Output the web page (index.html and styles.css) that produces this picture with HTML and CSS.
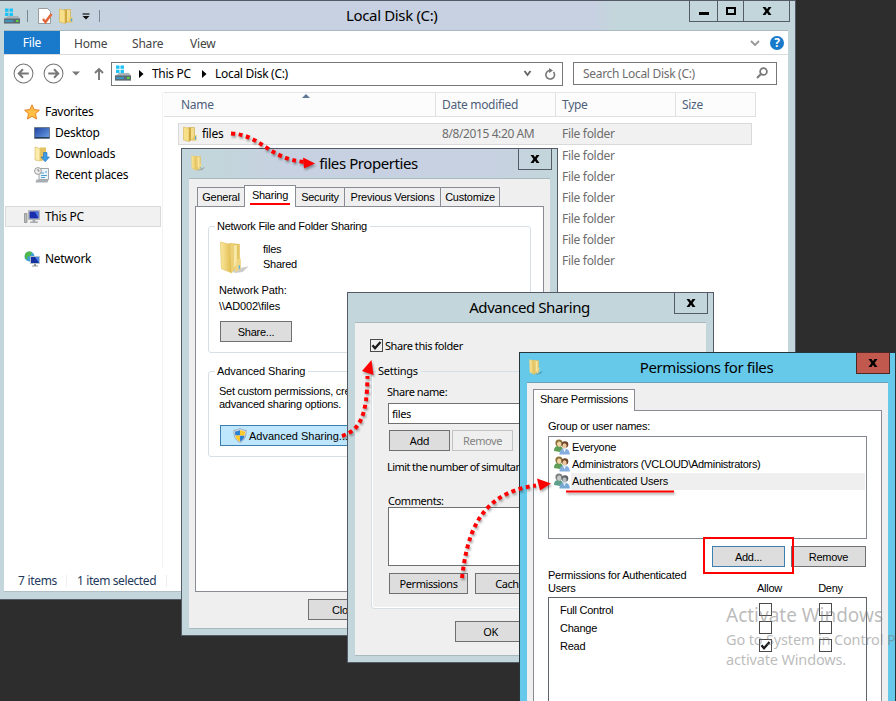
FILE: index.html
```html
<!DOCTYPE html>
<html lang="en">
<head>
  <meta charset="UTF-8">
  <title>Local Disk (C:)</title>
  <link rel="stylesheet" href="styles.css">
</head>
<body>

  <!-- shared icons -->
  <svg class="defs" width="0" height="0">
    <defs>
      <linearGradient id="gold" x1="0" y1="0" x2="1" y2="0">
        <stop offset="0" stop-color="#fbe9a0"/>
        <stop offset="1" stop-color="#dfb94a"/>
      </linearGradient>
      <linearGradient id="screen" x1="0" y1="0" x2="1" y2="1">
        <stop offset="0" stop-color="#1d3f9e"/>
        <stop offset="1" stop-color="#6fa6ea"/>
      </linearGradient>
    </defs>
    <symbol id="folder" viewBox="0 0 16 16">
      <path d="M6 1.500h6.500v12.500H6z" fill="#f3dd8c" stroke="#c9a640" stroke-width=".6"/>
      <path d="M1.500 1 7 2.500V15.500L1.500 14z" fill="#f8e08a" stroke="#d4b352" stroke-width=".6"/>
      <path d="M7 2.500 9 1.500v13L7 15.500z" fill="#d0a840"/>
      <path d="M12 9h2.500v5.500h-4v-2z" fill="#e8ca6c"/>
      <path d="M13.500 10.500v3" stroke="#4c9fe0" stroke-width="1.200"/>
    </symbol>
    <symbol id="folder-big" viewBox="0 0 30 34">
      <path d="M12 30 30 26 24 32 16 33z" fill="#000" opacity=".2"/>
      <path d="M10 2 21 3v21l-7 7z" fill="#e6c561"/>
      <path d="M14 5 18 4v20l-4 5z" fill="#f8e8a8"/>
      <path d="M1 1 11 3.500 13 33 2 28.500z" fill="url(#gold)" stroke="#e3c365" stroke-width=".7"/>
      <path d="M11 3.500 15 2v27l-2.500 4z" fill="#ecd077"/>
      <path d="M18 19 22 18v11l-6 3z" fill="#f0d680"/>
      <path d="M20.500 25v4" stroke="#69b1e2" stroke-width="1.500"/>
    </symbol>
    <symbol id="drive" viewBox="0 0 16 16">
      <path d="M1 .5h3.500v3.300H1zM5.500.5H9v3.300H5.500zM1 4.800h3.500V8H1zM5.500 4.800H9V8H5.500z" fill="#1cc1f5"/>
      <path d="M2 9.500 4 8h10L16 10.500v5H0v-5z" fill="#a9b4ba"/>
      <path d="M0 10.500h16v5H0z" fill="#5c6a73"/>
      <path d="M1 12h8v2H1z" fill="#3e94bd"/>
      <path d="M12 12h2.500v2H12z" fill="#59d335"/>
    </symbol>
    <symbol id="users" viewBox="0 0 16 16">
      <path d="M0 12c0-4 2-5 4.500-5S9 8 9 12l-3 1z" fill="#5f9e58"/>
      <circle cx="5" cy="4" r="3.600" fill="#8b7136"/>
      <ellipse cx="5.200" cy="5.200" rx="2.100" ry="2.700" fill="#f2d5a8"/>
      <circle cx="11" cy="5.500" r="3.300" fill="#6b4326"/>
      <ellipse cx="10.500" cy="6.700" rx="2.100" ry="2.500" fill="#eec9a1"/>
      <path d="M5.500 15.500c0-4 2-6 4.800-6s5.500 2 5.500 6z" fill="#84aede"/>
      <path d="m9 9.700 1.500 3.500 1.500-3.500z" fill="#f4f8fc"/>
    </symbol>
    <symbol id="users-gray" viewBox="0 0 16 16">
      <path d="M0 12c0-4 2-5 4.500-5S9 8 9 12l-3 1z" fill="#5fa08a"/>
      <circle cx="5" cy="4" r="3.600" fill="#7b807e"/>
      <ellipse cx="5.200" cy="5.200" rx="2.100" ry="2.700" fill="#c7cccb"/>
      <circle cx="11" cy="5.500" r="3.300" fill="#5c6266"/>
      <ellipse cx="10.500" cy="6.700" rx="2.100" ry="2.500" fill="#b9bec2"/>
      <path d="M5.500 15.500c0-4 2-6 4.800-6s5.500 2 5.500 6z" fill="#78a8d4"/>
      <path d="m9 9.700 1.500 3.500 1.500-3.500z" fill="#e8eef2"/>
    </symbol>
    <symbol id="close" viewBox="0 0 10 10">
      <path d="M.5 1h3L5 3.200 6.500 1h3L6.600 5l2.900 4h-3L5 6.800 3.500 9h-3l2.900-4z" fill="currentColor"/>
    </symbol>
    <symbol id="check" viewBox="0 0 13 13">
      <path d="M2.500 6.200 5 9.200 10.500 3" fill="none" stroke="#1a1a1a" stroke-width="2.300"/>
    </symbol>
  </svg>

  <!-- Explorer -->
  <div class="window explorer">
    <div class="explorer-title">
      <svg class="icon quick-drive"><use href="#drive"/></svg>
      <span class="tick"></span>
      <svg class="icon quick-props" viewBox="0 0 16 16">
        <path d="M1.500.5h9l3 3v12h-12z" fill="#fff" stroke="#888" stroke-width=".8"/>
        <path d="m6 11 2.500 3 6-8" fill="none" stroke="#e2693c" stroke-width="2.600"/>
      </svg>
      <svg class="icon quick-folder"><use href="#folder"/></svg>
      <svg class="quick-menu" viewBox="0 0 8 7"><path d="M.5 1h7" stroke="#111" stroke-width="1.200"/><path d="M.5 3h7L4 6.500z" fill="#111"/></svg>
      <span class="tick"></span>
      <span class="title-text">Local Disk (C:)</span>
      <div class="controls">
        <span class="control"><i class="minimize"></i></span>
        <span class="control small"><i class="maximize"></i></span>
        <span class="control wide"><svg class="x"><use href="#close"/></svg></span>
      </div>
    </div>

    <div class="explorer-body">
      <div class="ribbon">
        <span class="file-tab">File</span>
        <span class="r-home">Home</span>
        <span class="r-share">Share</span>
        <span class="r-view">View</span>
        <svg class="ribbon-chevron" viewBox="0 0 10 6"><path d="m1 1 4 4 4-4" fill="none" stroke="#999" stroke-width="1.900"/></svg>
        <svg class="help" viewBox="0 0 14 14"><circle cx="7" cy="7" r="7" fill="#1979ca"/><text x="7" y="11.300" text-anchor="middle">?</text></svg>
      </div>

      <div class="navbar">
        <svg class="nav-btn" viewBox="0 0 20 20"><circle cx="10" cy="10" r="9" fill="none" stroke="#777"/><path d="M15 10H6M9.500 6 5.500 10l4 4" fill="none" stroke="#777" stroke-width="1.900"/></svg>
        <svg class="nav-btn forward" viewBox="0 0 20 20"><circle cx="10" cy="10" r="9" fill="none" stroke="#777"/><path d="M5 10h9M10.500 6l4 4-4 4" fill="none" stroke="#777" stroke-width="1.900"/></svg>
        <svg class="nav-down" viewBox="0 0 8 5"><path d="M0 .5h8L4 4.500z" fill="#777"/></svg>
        <svg class="nav-up" viewBox="0 0 10 13"><path d="M5 13V2M1 6l4-4 4 4" fill="none" stroke="#777" stroke-width="1.900"/></svg>
        <div class="address">
          <svg class="icon"><use href="#drive"/></svg>
          <svg class="crumb" viewBox="0 0 5 8"><path d="M0 0v8l4.500-4z"/></svg>
          <span class="crumb-pc">This PC</span>
          <svg class="crumb" viewBox="0 0 5 8"><path d="M0 0v8l4.500-4z"/></svg>
          <span>Local Disk (C:)</span>
          <svg class="addr-chevron" viewBox="0 0 8 7"><path d="M1 1l3 4 3-4" fill="none" stroke="#666" stroke-width="1.900"/></svg>
          <svg class="refresh" viewBox="0 0 12 12"><path d="M9.500 4A4.300 4.300 0 1 1 5.500 2.500" fill="none" stroke="#777" stroke-width="1.600"/><path d="M5 0l4 2.500-4 2.500z" fill="#777"/></svg>
        </div>
        <div class="search">
          <span>Search Local Disk (C:)</span>
          <svg viewBox="0 0 12 12"><circle cx="7.500" cy="4.500" r="3.400" fill="none" stroke="#777" stroke-width="1.700"/><path d="M5 7 1 11" stroke="#777" stroke-width="2"/></svg>
        </div>
      </div>

      <div class="panes">
        <div class="tree">
          <div class="node">
            <svg class="icon" viewBox="0 0 16 16"><path d="m8 .8 2.200 4.800 5.200.6-3.900 3.500 1.100 5.300L8 12.400 3.400 15l1.100-5.300L.6 6.200l5.200-.6z" fill="#fdbf45" stroke="#e5832a"/></svg>
            Favorites
          </div>
          <div class="node child">
            <svg class="icon" viewBox="0 0 16 16"><path d="M.5 2.500h15v11H.5z" fill="url(#screen)" stroke="#6d7d8d"/><path d="M1 12.500h14" stroke="#2b3f59"/></svg>
            Desktop
          </div>
          <div class="node child">
            <svg class="icon" viewBox="0 0 16 16"><path d="M1 1 6 2.500V15L1 14z" fill="#fbedae" stroke="#d4b352" stroke-width=".6"/><path d="M6 1.500h6V14L6 15z" fill="#e3c25f"/><path d="M9.500 6.500h3.500V11h2.500L11.200 15.800 7 11h2.500z" fill="#3d9be6" stroke="#1e6db5" stroke-width=".6"/></svg>
            Downloads
          </div>
          <div class="node child">
            <svg class="icon" viewBox="0 0 16 16"><path d="M5 1.500h9.500v11H5z" fill="#eef5fa" stroke="#8a8f94" stroke-width=".8"/><path d="M2.500 12.500h12l-1 3h-12z" fill="#a7adb1"/><path d="M7 6h3M7 8.500h6M11 5h2M7 10.500h4" stroke="#4b9fd2"/><circle cx="4" cy="4" r="3.400" fill="#f0f0ee" stroke="#999"/><path d="M4 2v2h1.600" fill="none" stroke="#666" stroke-width=".8"/></svg>
            Recent places
          </div>
          <div class="node selected">
            <svg class="icon" viewBox="0 0 16 16"><path d="M.5 4.500h2.500v9H.5z" fill="#b6bbbd" stroke="#777" stroke-width=".6"/><path d="M4.500 1.500h11v9h-11z" fill="#c9ccce" stroke="#999" stroke-width=".6"/><path d="M5.500 2.500h9v7h-9z" fill="#1a2fae"/><path d="M11 2.500h3.500v7z" fill="#4c7be0"/><path d="M8.500 10.500h3v2h2.500v1.500H6V12.500h2.500z" fill="#a9adaf"/></svg>
            This PC
          </div>
          <div class="node network">
            <svg class="icon" viewBox="0 0 16 16"><circle cx="5.500" cy="5.500" r="5" fill="#40a0d8"/><path d="M1 3c3-3 5-3 7-1L6 5 3 6 4 9 1 7zM7 6l3-1v3z" fill="#4fb848"/><path d="M6.500 5.500h9v7h-9z" fill="#16309f" stroke="#c0c6cc" stroke-width=".9"/><path d="M11 6h4v6z" fill="#4a85e8"/><path d="M10 13h2v1.500h2v1H8v-1h2z" fill="#8f9497"/></svg>
            Network
          </div>
        </div>

        <div class="files">
          <div class="columns">
            <span class="c-name">Name<i class="sort"></i></span>
            <span class="c-date">Date modified</span>
            <span class="c-type">Type</span>
            <span class="c-size">Size</span>
          </div>
          <div class="file active">
            <span class="f-name"><svg class="icon"><use href="#folder"/></svg>files</span>
            <span class="f-date">8/8/2015 4:20 AM</span>
            <span class="f-type">File folder</span>
          </div>
          <div class="file"><span class="f-name"><svg class="icon"><use href="#folder"/></svg></span><span class="f-date"></span><span class="f-type">File folder</span></div>
          <div class="file"><span class="f-name"></span><span class="f-date"></span><span class="f-type">File folder</span></div>
          <div class="file"><span class="f-name"></span><span class="f-date"></span><span class="f-type">File folder</span></div>
          <div class="file"><span class="f-name"></span><span class="f-date"></span><span class="f-type">File folder</span></div>
          <div class="file"><span class="f-name"></span><span class="f-date"></span><span class="f-type">File folder</span></div>
          <div class="file"><span class="f-name"></span><span class="f-date"></span><span class="f-type">File folder</span></div>
        </div>
      </div>

      <div class="status">
        <span class="s-count">7 items</span>
        <span class="s-selected">1 item selected</span>
      </div>
    </div>
  </div>

  <!-- files Properties -->
  <div class="window dialog properties">
    <div class="dialog-title">
      <svg class="icon"><use href="#folder-big"/></svg>
      <span>files Properties</span>
      <span class="close"><svg class="x"><use href="#close"/></svg></span>
    </div>
    <div class="dialog-body sans">
      <div class="tabs">
        <span class="tab t-general">General</span>
        <span class="tab t-sharing current"><u>Sharing</u></span>
        <span class="tab t-security">Security</span>
        <span class="tab t-versions">Previous Versions</span>
        <span class="tab t-customize">Customize</span>
      </div>
      <div class="panel">
        <fieldset class="net-share">
          <legend>Network File and Folder Sharing</legend>
          <div class="share-head">
            <svg class="big-folder"><use href="#folder-big"/></svg>
            <div class="share-state">files<br>Shared</div>
          </div>
          <div class="net-path">Network Path:<br>\\AD002\files</div>
          <button class="b-share">Share...</button>
        </fieldset>
        <fieldset class="adv-share">
          <legend>Advanced Sharing</legend>
          <p>Set custom permissions, create<br>advanced sharing options.</p>
          <button class="b-advanced">
            <svg viewBox="0 0 14 16"><path d="M7 .5C9 2 11 2.500 13.500 2.500c0 6-1 10-6.500 13C1.500 12.500.5 8.500.5 2.500 3 2.500 5 2 7 .5z" fill="#e8ecef" stroke="#868e95" stroke-width=".8"/><path d="M7 2.200V8H2C1.700 6.500 1.700 5 1.700 3.700 4 3.500 5.500 3.200 7 2.200zM7 8h5c-.5 3-2 5-5 6.500z" fill="#2d7fd3"/><path d="M7 2.200C8.500 3.200 10 3.500 12.300 3.700c0 1.300 0 2.800-.3 4.300H7zM2 8h5v6.500C4 13 2.500 11 2 8z" fill="#fbc92a"/></svg>
            Advanced Sharing...
          </button>
        </fieldset>
      </div>
      <button class="b-close">Close</button>
    </div>
  </div>

  <!-- Advanced Sharing -->
  <div class="window dialog advanced">
    <div class="dialog-title">
      <span>Advanced Sharing</span>
      <span class="close"><svg class="x"><use href="#close"/></svg></span>
    </div>
    <div class="dialog-body tahoma">
      <div class="share-toggle"><span class="box"><svg><use href="#check"/></svg></span>Share this folder</div>
      <fieldset class="settings">
        <legend>Settings</legend>
        <div class="label">Share name:</div>
        <div class="input">files</div>
        <div class="buttons">
          <button class="b-add">Add</button>
          <button class="b-remove" disabled>Remove</button>
        </div>
        <div class="limit">Limit the number of simultaneous</div>
        <div class="comments-label">Comments:</div>
        <div class="comments"></div>
        <div class="buttons wide">
          <button class="b-permissions">Permissions</button>
          <button class="b-caching">Caching</button>
        </div>
      </fieldset>
      <button class="b-ok">OK</button>
    </div>
  </div>

  <!-- Permissions for files -->
  <div class="window dialog permissions">
    <div class="dialog-title">
      <svg class="icon"><use href="#folder-big"/></svg>
      <span>Permissions for files</span>
      <span class="close"><svg class="x"><use href="#close"/></svg></span>
    </div>
    <div class="dialog-body sans">
      <div class="tabs">
        <span class="tab t-perm current">Share Permissions</span>
      </div>
      <div class="panel">
        <div class="group-label">Group or user names:</div>
        <div class="users">
          <div class="user"><svg class="icon"><use href="#users"/></svg><span>Everyone</span></div>
          <div class="user"><svg class="icon"><use href="#users"/></svg><span>Administrators (VCLOUD\Administrators)</span></div>
          <div class="user picked"><svg class="icon"><use href="#users-gray"/></svg><span>Authenticated Users</span></div>
        </div>
        <div class="user-buttons">
          <button class="b-user-add">Add...</button>
          <button class="b-user-remove">Remove</button>
        </div>
        <div class="perm-head">
          <span class="perm-for">Permissions for Authenticated<br>Users</span>
          <span class="col">Allow</span>
          <span class="col">Deny</span>
        </div>
        <div class="perm-list">
          <div class="perm"><span>Full Control</span><i class="box"></i><i class="box"></i></div>
          <div class="perm"><span>Change</span><i class="box"></i><i class="box"></i></div>
          <div class="perm"><span>Read</span><i class="box"><svg><use href="#check"/></svg></i><i class="box"></i></div>
        </div>
      </div>
    </div>
  </div>

  <div class="watermark">
    <div class="wm-title">Activate Windows</div>
    <div>Go to System in Control P</div>
    <div>activate Windows.</div>
  </div>

  <!-- red step arrows -->
  <svg class="arrows" viewBox="0 0 896 701">
    <g class="dots">
      <path d="M231 133.500C262 135 267 158 304 162"/>
      <path d="M342 436C360 430 367 416 367.500 376"/>
      <path d="M462 578C467 536 478 493 536 485.500"/>
      <path class="line" d="M566 491.500H674"/>
    </g>
    <path class="head" d="M315 163.500 303 157.500 304 168.500z"/>
    <path class="head" d="M371.500 360 362 371 373.500 375z"/>
    <path class="head" d="M551 483.500 537 478.500 540 490.500z"/>
  </svg>

</body>
</html>
```
FILE: styles.css
```css
* {
  box-sizing: border-box;
}

body {
  margin: 0;
  height: 701px;
  overflow: hidden;
  position: relative;
  background: #2d2d2d;
  color: #000;
  font-family: "Noto Sans", "Open Sans", sans-serif;
  font-size: 12px;
  letter-spacing: -0.3px;
  white-space: nowrap;
}

.defs {
  position: absolute;
}

svg {
  display: block;
  flex: none;
}

.icon {
  width: 16px;
  height: 16px;
}

.x {
  width: 10px;
  height: 10px;
}

/* windows */
.window {
  position: absolute;
  background: #c3d6db;
  border: 1px solid #555b66;
}

.explorer {
  left: 0;
  top: 0;
  width: 796px;
  height: 600px;
  border-left: 0;
  padding: 0 7px 7px 4px;
  background: linear-gradient(90deg, #c3d6db 0, #c7d1e1 130px, #c7d1e1 595px, #c3d6db 615px) 0 0 / 100% 30px no-repeat #c3d6db;
}

.explorer-title {
  display: flex;
  align-items: center;
  height: 29px;
  position: relative;
}

.tick {
  width: 1px;
  height: 12px;
  background: #7d8792;
  margin-left: 7px;
}

.quick-props {
  margin-left: 9px;
}

.quick-folder {
  margin-left: 5px;
}

.quick-menu {
  width: 8px;
  height: 7px;
  margin-left: 8px;
  margin-top: 2px;
}

.quick-menu + .tick {
  margin-left: 9px;
}

.title-text {
  margin-left: 246px;
  padding-bottom: 2px;
  font-size: 15px;
  letter-spacing: -0.35px;
}

.controls {
  display: flex;
  align-self: flex-start;
  margin-left: auto;
  margin-right: -2px;
  height: 21px;
  border: 1px solid #555b66;
  border-top: 0;
}

.control {
  width: 28px;
  display: flex;
  align-items: center;
  justify-content: center;
  border-right: 1px solid #555b66;
}

.control.small {
  width: 26px;
}

.control.wide {
  width: 45px;
  border-right: 0;
}

.minimize {
  width: 10px;
  height: 3px;
  margin-top: 5px;
  background: #000;
}

.maximize {
  width: 10px;
  height: 8px;
  border: 2px solid #000;
}

.explorer-body {
  height: 562px;
  background: #fff;
  border-top: 1px solid #a9b9c0;
  border-bottom: 1px solid #b1c0c6;
  display: flex;
  flex-direction: column;
}

.ribbon {
  display: flex;
  align-items: center;
  height: 24px;
  border-bottom: 1px solid #dadbdc;
  color: #444;
  letter-spacing: -0.2px;
}

.file-tab {
  width: 56px;
  height: 23px;
  line-height: 24px;
  text-align: center;
  background: #1979ca;
  color: #fff;
}

.r-home {
  width: 58px;
  margin-left: 14px;
  padding-top: 2px;
}

.r-share {
  width: 58px;
  padding-top: 2px;
}

.r-view {
  padding-top: 2px;
}

.ribbon-chevron {
  width: 10px;
  height: 6px;
  margin-left: auto;
}

.help {
  width: 14px;
  height: 14px;
  margin: 0 4px 0 10px;
}

.help text {
  fill: #fff;
  font-size: 12px;
  font-weight: bold;
}

.navbar {
  display: flex;
  align-items: center;
  height: 37px;
  padding-left: 9px;
}

.nav-btn {
  width: 21px;
  height: 21px;
}

.forward {
  margin-left: 9px;
}

.nav-down {
  width: 8px;
  height: 5px;
  margin-left: 8px;
}

.nav-up {
  width: 10px;
  height: 13px;
  margin: 0 7px 0 14px;
}

.address {
  display: flex;
  align-items: center;
  width: 452px;
  height: 24px;
  padding-left: 3px;
  border: 1px solid #777;
}

.address .icon {
  margin-top: -2px;
}

.crumb {
  width: 5px;
  height: 8px;
  margin: 0 8px;
}

.crumb-pc {
  width: 41px;
}

.crumb-pc + .crumb {
  margin-left: 9px;
}

.addr-chevron {
  width: 9px;
  height: 7px;
  margin-left: auto;
}

.refresh {
  width: 12px;
  height: 12px;
  margin: 0 6px 0 12px;
}

.search {
  display: flex;
  align-items: center;
  justify-content: space-between;
  width: 204px;
  height: 23px;
  margin-left: 10px;
  margin-top: -1px;
  padding: 0 8px 0 9px;
  border: 1px solid #777;
  color: #6d6d6d;
}

.search svg {
  width: 12px;
  height: 12px;
}

.panes {
  display: flex;
  flex: 1;
}

.tree {
  width: 159px;
  height: 476px;
  padding: 9px 1px 0 1px;
  border-right: 1px solid #f2f3f5;
}

.node {
  display: flex;
  align-items: center;
  gap: 5px;
  height: 21px;
  padding-left: 19px;
}

.node.child {
  padding-left: 29px;
}

.node.selected {
  margin: 21px 0;
  padding-left: 18px;
  background: #f1f1f1;
  border: 1px solid #d9d9d9;
}

.files {
  width: 592px;
  margin-left: 1px;
}

.columns {
  display: flex;
  height: 25px;
  line-height: 24px;
  margin-bottom: 6px;
  border-top: 1px solid #e5e5e5;
  border-bottom: 1px solid #e0e0e0;
  background: #fcfcfc;
  color: #4c607a;
}

.columns span {
  border-right: 1px solid #e0e0e0;
  padding-left: 6px;
  width: 120px;
}

.columns .c-name {
  width: 272px;
  padding-left: 17px;
  position: relative;
}

.columns .c-size {
  width: 80px;
}

.sort {
  position: absolute;
  left: 138px;
  top: 1px;
  border: 4px solid transparent;
  border-top: 0;
  border-bottom-color: #5f7896;
}

.file {
  display: flex;
  align-items: center;
  height: 21px;
  margin-left: 14px;
  padding-left: 4px;
  padding-bottom: 1px;
  color: #6d6d6d;
}

.file.active {
  width: 574px;
  height: 22px;
  padding-left: 3px;
  background: #f1f1f1;
  border: 1px solid #d9d9d9;
}

.f-name {
  display: flex;
  gap: 4px;
  align-items: center;
  width: 260px;
  color: #000;
}

.f-date {
  width: 120px;
  letter-spacing: -0.4px;
}

.status {
  display: flex;
  align-items: center;
  height: 22px;
  padding-top: 2px;
  color: #1e395b;
}

.status span {
  height: 12px;
  line-height: 12px;
  border-right: 1px solid #eee;
}

.s-count {
  width: 63px;
  padding-left: 14px;
}

.s-selected {
  width: 100px;
  padding-left: 10px;
  letter-spacing: -0.4px;
}

/* dialogs */
.dialog-title {
  display: flex;
  align-items: center;
  justify-content: center;
  position: relative;
  height: 29px;
  padding: 0 2px 2px 0;
  font-size: 15px;
  letter-spacing: -0.42px;
}

.dialog-title .icon {
  position: absolute;
  left: 8px;
  top: 6px;
}

.close {
  position: absolute;
  right: 5px;
  top: -1px;
  display: flex;
  align-items: center;
  justify-content: center;
  width: 34px;
  height: 22px;
  border: 1px solid #555b66;
}

.dialog-body {
  margin: 0 7px;
  background: #efefef;
  border-top: 1px solid #a9b9c0;
  border-bottom: 1px solid #a9b9c0;
}

.sans {
  font-family: "Liberation Sans", Arial, sans-serif;
  font-size: 11px;
  letter-spacing: -0.25px;
}

.tahoma {
  font-size: 11px;
  letter-spacing: -0.42px;
}

.properties {
  left: 181px;
  top: 148px;
  width: 377px;
  height: 488px;
  background: linear-gradient(90deg, #c3d6db 40px, #c7d1e1 100px, #c7d1e1 310px, #c3d6db 365px) 0 0 / 100% 28px no-repeat #c3d6db;
}

.properties .dialog-body {
  height: 451px;
}

.advanced {
  left: 347px;
  top: 292px;
  width: 367px;
  height: 371px;
}

.advanced .dialog-body {
  height: 334px;
  padding: 16px 0 0 15px;
}

.permissions {
  left: 519px;
  top: 352px;
  width: 377px;
  height: 360px;
  background: #66c9ea;
  border-color: #26343b;
}

.permissions .dialog-body {
  height: 330px;
  border-top-color: #6d9fb8;
}

.permissions .close {
  background: #c1594f;
  border-color: #4b2826;
}

.tabs {
  display: flex;
  align-items: flex-end;
  height: 27px;
  padding-left: 8px;
}

.tab {
  height: 19px;
  line-height: 19px;
  text-align: center;
  border: 1px solid #898c95;
  border-bottom: 0;
  background: #efefef;
  margin-left: -1px;
}

.tab.current {
  height: 22px;
  margin-bottom: -1px;
  background: #fff;
  position: relative;
}

.t-general {
  width: 48px;
  margin-left: 0;
}

.t-sharing {
  width: 52px;
}

.t-sharing u {
  display: inline-block;
  height: 19px;
  padding: 0 2px;
  text-decoration: none;
  border-bottom: 2px solid #f00;
}

.t-security {
  width: 50px;
}

.t-versions {
  width: 97px;
}

.t-customize {
  width: 60px;
}

.panel {
  width: 349px;
  margin-left: 6px;
  background: #fff;
  border: 1px solid #898c95;
}

.properties .panel {
  height: 386px;
  padding: 12px;
}

fieldset {
  margin: 0;
  padding: 0 10px;
  min-width: 0;
  border: 1px solid #d5dfe5;
  border-radius: 3px;
}

legend {
  height: 14px;
  line-height: 14px;
  margin-left: -4px;
  padding: 0 3px 0 2px;
}

button {
  display: flex;
  align-items: center;
  justify-content: center;
  flex: none;
  height: 21px;
  padding: 0;
  font: inherit;
  letter-spacing: inherit;
  color: #000;
  background: #ddd;
  border: 1px solid #707070;
}

button:disabled {
  color: #838383;
  background: #efefef;
  border-color: #bfc3c5;
}

.net-share {
  width: 323px;
  height: 134px;
}

.share-head {
  display: flex;
  gap: 14px;
  padding-top: 8px;
}

.big-folder {
  width: 30px;
  height: 33px;
}

.share-state {
  padding-top: 1px;
  line-height: 15px;
}

.net-path {
  line-height: 16px;
  margin: 8px 0 7px;
  letter-spacing: -0.1px;
}

.b-share {
  width: 72px;
  margin-left: 1px;
}

.adv-share {
  width: 323px;
  height: 93px;
  margin-top: 11px;
}

.adv-share legend {
  letter-spacing: -0.1px;
}

.adv-share p {
  width: 128px;
  overflow: hidden;
  margin: 7px 0 14px;
  line-height: 13px;
}

.b-advanced {
  width: 141px;
  margin-left: 1px;
  background: #bee6fd;
  border-color: #3c7fb1;
  letter-spacing: 0;
}

.b-advanced svg {
  width: 14px;
  height: 15px;
  margin-right: 2px;
}

.b-close {
  width: 75px;
  margin: 7px 0 0 119px;
}

/* advanced sharing */
.share-toggle {
  display: flex;
  align-items: center;
  gap: 2px;
  height: 13px;
}

.box {
  width: 13px;
  height: 13px;
  flex: none;
  border: 1px solid #4a4a4a;
}

.box svg {
  width: 13px;
  height: 13px;
  margin: -1px;
}

.settings {
  width: 320px;
  height: 245px;
  margin: 12px 0 0 1px;
  padding-left: 16px;
  border-color: #d5dfe5;
  box-shadow: inset 1px -1px #fff;
}

.settings legend {
  margin-left: -12px;
  letter-spacing: -0.25px;
}

.label {
  height: 14px;
  line-height: 14px;
  margin: 7px 0 4px -1px;
}

.input {
  width: 290px;
  height: 21px;
  line-height: 19px;
  padding-left: 3px;
  background: #fff;
  border: 1px solid #707070;
}

.buttons {
  display: flex;
  gap: 2px;
  margin: 6px 0 0 1px;
}

.buttons.wide {
  gap: 7px;
  margin-top: 7px;
}

.b-add,
.b-remove {
  width: 61px;
}

.limit {
  width: 132px;
  overflow: hidden;
  height: 14px;
  line-height: 14px;
  margin: 9px 0 0 -1px;
  letter-spacing: -0.58px;
}

.comments-label {
  height: 13px;
  line-height: 13px;
  margin-top: 20px;
}

.comments {
  width: 290px;
  height: 59px;
  background: #fff;
  border: 1px solid #707070;
}

.b-permissions,
.b-caching {
  width: 79px;
}

.b-ok {
  width: 71px;
  margin: 12px 0 0 85px;
}

/* permissions */
.t-perm {
  width: 102px;
  margin-left: -2px;
}

.permissions .panel {
  height: 310px;
  padding: 8px 14px 0;
}

.group-label {
  height: 17px;
  line-height: 14px;
}

.users {
  height: 103px;
  padding: 2px 1px 0 5px;
  border: 1px solid #828790;
}

.user {
  display: flex;
  gap: 1px;
  height: 17px;
  line-height: 17px;
}

.user span {
  flex: 1;
  padding-left: 1px;
  letter-spacing: -0.3px;
}

.user.picked span {
  background: #efefef;
  letter-spacing: -0.15px;
}

.user-buttons {
  display: flex;
  justify-content: flex-end;
  gap: 6px;
  margin: 7px 1px 2px 0;
}

.b-user-add {
  width: 73px;
  position: relative;
  border-color: #3c7fb1;
}

.b-user-add::after {
  content: "";
  position: absolute;
  inset: -10px -10px -8px;
  border: 2px solid #f00;
}

.b-user-remove {
  width: 75px;
}

.perm-head {
  display: flex;
  align-items: flex-end;
  height: 28px;
  line-height: 13px;
  padding-bottom: 2px;
}

.perm-for {
  width: 191px;
}

.col {
  width: 61px;
  text-align: center;
}

.perm-list {
  height: 120px;
  padding: 3px 0 0 11px;
  border: 1px solid #5f646b;
}

.perm {
  display: flex;
  align-items: center;
  height: 18px;
}

.perm span {
  width: 199px;
  flex: none;
}

.perm .box {
  margin-right: 47px;
  margin-top: -1px;
}

.watermark {
  position: absolute;
  left: 726px;
  top: 602px;
  width: 170px;
  overflow: hidden;
  color: rgba(120, 120, 120, 0.5);
  font-size: 14.500px;
  line-height: 20px;
  letter-spacing: -0.15px;
}

.wm-title {
  font-size: 19px;
  line-height: 27px;
  letter-spacing: 0;
}

/* annotations */
.arrows {
  position: absolute;
  left: 0;
  top: 0;
  width: 896px;
  height: 701px;
  filter: drop-shadow(1px 2px 1px rgba(0, 0, 0, 0.35));
}

.dots path {
  fill: none;
  stroke: #f00;
  stroke-width: 4;
  stroke-dasharray: 4 3.500;
}

.dots .line {
  stroke-width: 2;
  stroke-dasharray: none;
}

.head {
  fill: #f00;
}
```
